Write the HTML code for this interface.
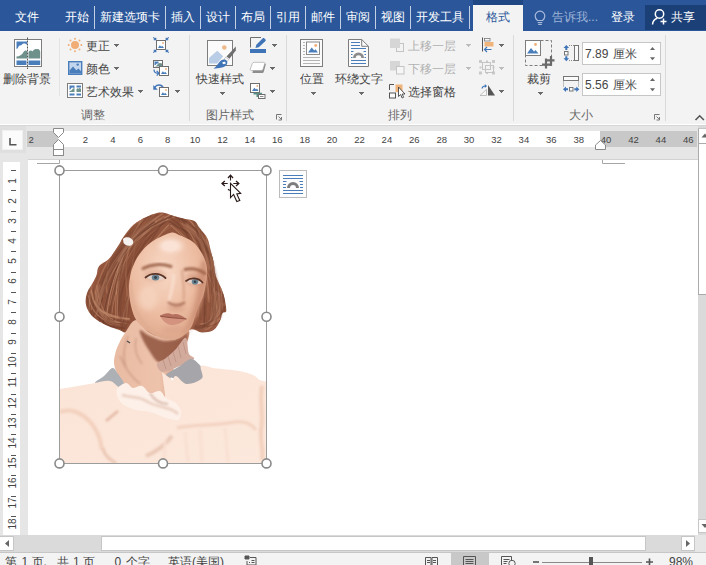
<!DOCTYPE html>
<html><head><meta charset="utf-8">
<style>
html,body{margin:0;padding:0;}
body{width:706px;height:565px;overflow:hidden;position:relative;background:#fff;font-family:"Liberation Sans",sans-serif;font-size:12px;color:#444;}
.a{position:absolute;white-space:nowrap;}
#tabs{left:0;top:0;width:706px;height:31px;background:#2b579a;}
.tab{position:absolute;top:9px;color:#fff;font-size:12px;line-height:16px;white-space:nowrap;margin-left:1px;}
.sep{position:absolute;top:6px;width:1px;height:23px;background:#c3cfe3;}
#ribbon{left:0;top:31px;width:706px;height:93px;background:#f3f3f3;}
.t{position:absolute;font-size:12px;line-height:14px;color:#444;white-space:nowrap;}
.g{color:#666;}
.dis{color:#b1b1b1;}
.vs{position:absolute;top:41px;width:1px;height:79px;background:#dadada;}
.arr{position:absolute;width:5px;height:1px;background:#6a6a6a;}
.arr::before{content:"";position:absolute;left:1px;top:1px;width:3px;height:1px;background:inherit;}
.arr::after{content:"";position:absolute;left:2px;top:2px;width:1px;height:1px;background:inherit;}
.arr.d{background:#bdbdbd;}
.rn{position:absolute;top:133.5px;width:20px;text-align:center;font-size:9.5px;line-height:12px;color:#444;}
.vn{position:absolute;left:3px;width:20px;height:20px;font-size:10px;color:#444;}
.vn span{position:absolute;left:0;top:0;width:20px;height:20px;line-height:20px;text-align:center;transform:rotate(-90deg);}
.st{position:absolute;top:554px;font-size:12px;line-height:16px;color:#444;white-space:nowrap;}
svg{position:absolute;overflow:visible;}
</style></head><body>
<!-- TAB BAR -->
<div id="tabs" class="a"></div>
<div class="tab" style="left:14px">文件</div>
<div class="tab" style="left:64px">开始</div>
<div class="sep" style="left:94px"></div>
<div class="tab" style="left:99px">新建选项卡</div>
<div class="sep" style="left:165px"></div>
<div class="tab" style="left:170px">插入</div>
<div class="sep" style="left:200px"></div>
<div class="tab" style="left:205px">设计</div>
<div class="sep" style="left:235px"></div>
<div class="tab" style="left:240px">布局</div>
<div class="sep" style="left:270px"></div>
<div class="tab" style="left:275px">引用</div>
<div class="sep" style="left:305px"></div>
<div class="tab" style="left:310px">邮件</div>
<div class="sep" style="left:340px"></div>
<div class="tab" style="left:345px">审阅</div>
<div class="sep" style="left:375px"></div>
<div class="tab" style="left:380px">视图</div>
<div class="sep" style="left:410px"></div>
<div class="tab" style="left:415px">开发工具</div>
<div class="sep" style="left:469px"></div><div class="a" style="left:473px;top:0;width:50px;height:5px;background:#1f4784;"></div><div class="a" style="left:473px;top:5px;width:50px;height:26px;background:#f3f3f3;"></div>
<div class="tab" style="left:485px;color:#2b579a">格式</div>
<div class="tab" style="left:551px;color:#9fb3d6">告诉我...</div>
<div class="tab" style="left:610px">登录</div>
<div class="a" style="left:645px;top:5px;width:61px;height:25px;background:#1b3f77;"></div>
<div class="tab" style="left:670px">共享</div>
<!-- RIBBON -->
<div id="ribbon" class="a"></div>

<!-- group separators -->
<div class="vs" style="left:189px;top:35px;height:86px"></div>
<div class="vs" style="left:286px;top:35px;height:86px"></div>
<div class="vs" style="left:513px;top:35px;height:86px"></div>
<div class="vs" style="left:665px;top:35px;height:86px"></div>
<div class="vs" style="left:59px;top:38px;height:58px;background:#e4e4e4"></div>
<!-- G1 -->
<div class="t" style="left:3px;top:72px">删除背景</div>
<div class="t" style="left:86px;top:39px">更正</div><div class="arr" style="left:114px;top:44px"></div>
<div class="t" style="left:86px;top:62px">颜色</div><div class="arr" style="left:114px;top:67px"></div>
<div class="t" style="left:86px;top:85px">艺术效果</div><div class="arr" style="left:138px;top:90px"></div>
<div class="arr" style="left:175px;top:90px"></div>
<div class="t g" style="left:81px;top:108px">调整</div>
<!-- G2 -->
<div class="t" style="left:196px;top:72px">快速样式</div><div class="arr" style="left:220px;top:92px"></div>
<div class="arr" style="left:272px;top:44px"></div>
<div class="arr" style="left:270px;top:67px"></div>
<div class="arr" style="left:270px;top:90px"></div>
<div class="t g" style="left:206px;top:108px">图片样式</div>
<!-- G3 -->
<div class="t" style="left:300px;top:72px">位置</div><div class="arr" style="left:311px;top:92px"></div>
<div class="t" style="left:335px;top:72px">环绕文字</div><div class="arr" style="left:359px;top:92px"></div>
<div class="t dis" style="left:408px;top:39px">上移一层</div><div class="arr d" style="left:466px;top:44px"></div>
<div class="t dis" style="left:408px;top:62px">下移一层</div><div class="arr d" style="left:466px;top:67px"></div>
<div class="t" style="left:408px;top:85px">选择窗格</div>
<div class="arr" style="left:499px;top:44px"></div>
<div class="arr d" style="left:499px;top:67px"></div>
<div class="arr" style="left:499px;top:90px"></div>
<div class="t g" style="left:388px;top:108px">排列</div>
<!-- G4 -->
<div class="t" style="left:527px;top:72px">裁剪</div><div class="arr" style="left:538px;top:92px"></div>
<div class="a" style="left:582px;top:42px;width:77px;height:21px;background:#fff;border:1px solid #c6c6c6;"></div>
<div class="a" style="left:582px;top:73px;width:77px;height:21px;background:#fff;border:1px solid #c6c6c6;"></div>
<div class="t" style="left:585px;top:47px;line-height:15px;letter-spacing:0">7.89</div><div class="t" style="left:613px;top:47px;line-height:15px;">厘米</div>
<div class="t" style="left:585px;top:78px;line-height:15px;letter-spacing:0">5.56</div><div class="t" style="left:613px;top:78px;line-height:15px;">厘米</div>
<div class="t g" style="left:569px;top:108px">大小</div>

<!-- ICONS -->
<svg id="ic" style="left:0;top:0" width="706" height="565" viewBox="0 0 706 565">
<!-- remove background -->
<g>
<rect x="14.5" y="39.5" width="27" height="27" fill="#fff" stroke="#7d7d7d"/>
<path d="M16.5 41.5h10.5v3.5c-1-1.6-4.2-2.2-5.5 0.2c-2.2-0.3-3.6 1.2-3.4 3c-0.8 0.1-1.3 0.5-1.6 1z" fill="#4a7ebb"/>
<path d="M16.5 58.5v-2c3-0.2 5.500-1.5 7-4.500c1-1.8 2.500-2 3.500-1v7.500z" fill="#6f918c"/>
<path d="M28.500 58.500v-6.500c1.200-1.700 2.800-1.900 4-0.600c1-2 3-3 4.500-2.200c1.300-0.800 2.700 0.200 3.200 2.300v7z" fill="#6f918c"/>
<rect x="16.500" y="60.500" width="10" height="4.500" fill="#4a7ebb"/>
<rect x="28.500" y="60.500" width="11.700" height="4.500" fill="#4a7ebb"/>
<line x1="27.500" y1="37.500" x2="27.500" y2="69" stroke="#555" stroke-width="1" stroke-dasharray="2 1"/>
</g>
<!-- sun -->
<g fill="#f0ae76">
<circle cx="75" cy="45" r="4"/>
<circle cx="75" cy="38.700" r="1"/><circle cx="75" cy="51.300" r="1"/>
<circle cx="68.700" cy="45" r="1"/><circle cx="81.300" cy="45" r="1"/>
<circle cx="70.500" cy="40.500" r="1"/><circle cx="79.500" cy="40.500" r="1"/>
<circle cx="70.500" cy="49.500" r="1"/><circle cx="79.500" cy="49.500" r="1"/>
</g>
<!-- color -->
<g>
<rect x="68.700" y="61.700" width="13" height="12.600" fill="#c3d6ee" stroke="#4a7ebb" stroke-width="1.400"/>
<path d="M69.500 73.500v-3l3.500-4l3.300 3.700l2.200-1.700l2.700 3v2z" fill="#4a7ebb"/>
<circle cx="77.700" cy="64.600" r="1.200" fill="#4a7ebb"/>
</g>
<!-- artistic effects -->
<g>
<rect x="67.500" y="83.500" width="15" height="14" fill="#fff" stroke="#7d7d7d"/>
<path d="M69.500 85.500h5v3c-1.500-1.500-3.500-1-3.800 0.800c-0.700 0-1 0.400-1.200 0.800z" fill="#4a7ebb"/>
<path d="M69.500 92v-1c1.500 0 2.500-0.800 3.200-2.200c0.500-0.700 1.300-0.700 1.800-0.200v3.400z" fill="#6f918c"/>
<path d="M76.500 85.500h4.500v2h-4.500z" fill="#4a7ebb"/>
<path d="M76.500 92v-3c0.800-1 1.500-1 2.200-0.300c0.700-0.900 1.700-0.900 2.300 0.300v3z" fill="#6f918c"/>
<rect x="69.500" y="93.500" width="5" height="2" fill="#4a7ebb"/>
<rect x="76.500" y="93.500" width="4.500" height="2" fill="#4a7ebb"/>
</g>

<!-- compress -->
<g>
<rect x="156.500" y="40.500" width="9" height="9" fill="#fff" stroke="#6e6e6e"/>
<path d="M158 48l1.800-2.800l1.400 1.600l1-1l1.800 2.200z" fill="#4a7ebb"/>
<circle cx="163" cy="43" r="0.900" fill="#f0ae76"/>
<g stroke="#3f74b8" stroke-width="1.100" fill="none">
<path d="M153.300 37.300l2.400 2.400M153.700 39.800h2.100v-2.100"/>
<path d="M168.700 37.300l-2.400 2.400M168.300 39.800h-2.100v-2.100"/>
<path d="M153.300 52.700l2.400-2.400M153.700 50.200h2.100v2.100"/>
<path d="M168.700 52.700l-2.400-2.400M168.300 50.200h-2.100v2.100"/>
</g>
</g>
<!-- change picture -->
<g>
<rect x="153.500" y="60.500" width="9" height="7" fill="#fff" stroke="#6e6e6e"/>
<path d="M154.500 61.500h4v2.500c-1-0.800-2.200-0.300-2.500 0.700c-0.700 0-1.200 0.400-1.500 0.900z" fill="#4a7ebb"/>
<path d="M154.500 66.500c1.500-0.300 2.500-1 3.200-2.300c1-1.300 2.800-1.600 4.300-0.600v2.900z" fill="#6f918c"/>
<rect x="159.500" y="66.500" width="9" height="9" fill="#fff" stroke="#6e6e6e"/>
<path d="M161 74l1.800-2.800l1.400 1.600l1-1l1.800 2.200z" fill="#4a7ebb"/>
<circle cx="166" cy="69" r="0.900" fill="#f0ae76"/>
<path d="M154 69.500c0 2.500 1.500 3.800 4 3.800" fill="none" stroke="#3f74b8" stroke-width="1.200"/>
<path d="M156.700 71l2.300 2.300l-2.300 2.300" fill="none" stroke="#3f74b8" stroke-width="1.200"/>
</g>
<!-- reset picture -->
<g>
<path d="M154.200 88.500c1-3 4-4.300 6.500-3.200c1.300 0.600 2.200 1.500 2.600 2.700" fill="none" stroke="#3f74b8" stroke-width="1.500"/>
<path d="M153.300 85v4.800h4.500z" fill="#3f74b8"/>
<rect x="159.500" y="87.500" width="9" height="9" fill="#fff" stroke="#6e6e6e"/>
<path d="M161 95l1.800-2.800l1.400 1.600l1-1l1.800 2.200z" fill="#4a7ebb"/>
<circle cx="166" cy="90" r="0.900" fill="#f0ae76"/>
</g>

<!-- quick styles -->
<g>
<rect x="207.500" y="40.500" width="25" height="25" fill="#fbfbfb" stroke="#7d7d7d"/>
<path d="M209 63.500v-5.500l8.200-7.200l6 5.500l-6 7.200z" fill="#b9cde6"/>
<circle cx="224.300" cy="47.500" r="2.300" fill="#f0b98a"/>
<path d="M235.800 46.500v4l-6.300 8.200l-3-2.200z" fill="#6e6e6e"/>
<path d="M225.700 57.300l3 2.200l-1.500 1.900l-3-2.200z" fill="#fff" stroke="#8a8a8a" stroke-width="0.500"/>
<path d="M224 59.500c2 0.200 3.200 1.300 3.300 2.800c0.200 2.700-2.300 4.500-5.500 5.200c-3 0.700-6 0.900-8.300 1c3-2 4.200-4.200 5.700-6.200c1.300-1.800 3-2.900 4.800-2.800z" fill="#3f74b8"/>
<path d="M222 63c0.800-1.200 2-1.600 3-1.200c0.700 0.500 0.800 1.500 0.200 2.500c-0.500-0.700-1.200-0.700-1.800 0c-0.200-0.700-0.700-1.100-1.400-1.300z" fill="#fff"/>
</g>
<!-- picture border -->
<g>
<path d="M250.500 47.500v-10h10.500" fill="none" stroke="#6e6e6e"/>
<path d="M264.200 38.200l1.300 1.300c0.400 0.400 0.400 1 0 1.400l-6.700 6.400l-3.300 0.700l0.800-3.200l6.500-6.600c0.400-0.400 1-0.400 1.400 0z" fill="#3f74b8"/>
<rect x="250" y="49" width="16" height="4" fill="#3f74b8"/>
</g>
<!-- picture effects -->
<g>
<path d="M254.500 63.500h10.200c0.800 0 1.200 0.600 1 1.300l-1.800 6.700c-0.300 1-1 1.500-2 1.500h-9.500z" fill="#8d8d8d"/>
<path d="M254.200 62.300h9.300c1 0 1.500 0.600 1.200 1.500l-1.700 5.500c-0.300 0.800-0.900 1.200-1.700 1.200h-9.800c-1 0-1.500-0.600-1.200-1.500l2-5.500c0.300-0.800 1-1.200 1.900-1.200z" fill="#fff" stroke="#9a9a9a" stroke-width="0.600"/>
</g>
<!-- picture layout -->
<g>
<rect x="250.500" y="83.500" width="9" height="9" fill="#fff" stroke="#6e6e6e"/>
<path d="M252 91l2.300-3.300l1.700 1.800l1-1l1.500 2.500z" fill="#4a7ebb"/>
<circle cx="257.300" cy="86" r="0.900" fill="#f0ae76"/>
<path d="M253.500 92.800h8.500v1.600h-3.300v2.600h-2.200v-2.600h-3z" fill="#5b8f85"/>
<rect x="258.500" y="94.500" width="6.500" height="4" fill="#fff" stroke="#6e6e6e"/>
<rect x="260" y="96" width="3.500" height="1" fill="#8a8a8a"/>
</g>

<!-- position -->
<g>
<rect x="300.500" y="39.500" width="22" height="27" fill="#fafafa" stroke="#7d7d7d"/>
<rect x="306.500" y="42" width="13" height="12.500" fill="#fff" stroke="#8a8a8a"/>
<path d="M308 52.500l3.700-5l2.500 3l1.300-1.300l2.500 3.300z" fill="#4a7ebb"/>
<circle cx="315.700" cy="45.500" r="1.400" fill="#f0ae76"/>
<g stroke="#b5b5b5" stroke-width="1">
<path d="M303 42.500h2M303 45.500h2M303 48.500h2M303 51.500h2M303 54.500h2"/>
<path d="M303 57.500h17M303 60.500h17M303 63.500h17"/>
</g>
</g>
<!-- wrap text -->
<g>
<path d="M348.500 39.500h13.200l6.800 6.800v20.200h-20z" fill="#fafafa" stroke="#7d7d7d"/>
<path d="M361.700 39.500v6.800h6.800" fill="none" stroke="#7d7d7d"/>
<g stroke="#4a7ebb" stroke-width="1">
<path d="M351 42.500h9M351 45.500h9M351 48.500h15M351 60.500h15M351 63.500h15"/>
<path d="M351 51.500h2.500M363.500 51.500h2.500M351 54.500h1.500M364.500 54.500h1.500M351 57.500h1.500M364.500 57.500h1.500"/>
</g>
<path d="M353 58a5.500 5.500 0 0 1 11 0h-2.700a2.800 2.800 0 0 0 -5.600 0z" fill="#8a8a8a"/>
</g>
<!-- bring forward (disabled) -->
<g>
<rect x="396.500" y="43.500" width="7" height="8" fill="none" stroke="#c4c4c4"/>
<rect x="390" y="38.500" width="10" height="9.500" fill="#d6d6d6"/>
</g>
<!-- send backward (disabled) -->
<g>
<rect x="390" y="61" width="10" height="9.500" fill="#d6d6d6"/>
<rect x="396.500" y="66.500" width="7.500" height="7.500" fill="#f6f6f6" stroke="#c4c4c4"/>
</g>
<!-- selection pane -->
<g>
<path d="M394 84.500h-4.500v5.500" fill="none" stroke="#555"/>
<rect x="389.500" y="93" width="6" height="5" fill="#fafafa" stroke="#555"/>
<rect x="395.500" y="84.500" width="7" height="7.500" fill="#f0b47a"/>
<path d="M398.500 87v9.500l2.200-2l1.400 3.500l1.500-0.700l-1.400-3.300h2.800z" fill="#fff" stroke="#444" stroke-width="0.900"/>
</g>
<!-- align -->
<g>
<path d="M482.500 37.500v14" stroke="#555" fill="none"/>
<rect x="484.500" y="38.500" width="5.500" height="2.500" fill="#fafafa" stroke="#777" stroke-width="0.800"/>
<rect x="484.500" y="42" width="9" height="4.500" fill="#f0b47a"/>
<path d="M484.500 49.500h7M487 47l-2.500 2.500l2.500 2.500" fill="none" stroke="#3f74b8" stroke-width="1.200"/>
</g>
<!-- group (disabled) -->
<g fill="#c9c9c9">
<rect x="479" y="60" width="3" height="3"/><rect x="492" y="60" width="3" height="3"/>
<rect x="479" y="71.500" width="3" height="3"/><rect x="492" y="71.500" width="3" height="3"/>
<rect x="486" y="60.500" width="2" height="2"/><rect x="486" y="72" width="2" height="2"/>
<rect x="479.500" y="66.500" width="2" height="2"/><rect x="492.500" y="66.500" width="2" height="2"/>
<g fill="none" stroke="#c4c4c4"><rect x="482.500" y="62.500" width="8" height="7"/><rect x="485.500" y="65.500" width="8" height="7"/></g>
</g>
<!-- rotate -->
<g>
<path d="M486.500 89.500v6h-6.500z" fill="#f8f8f8" stroke="#b8b8b8" stroke-width="0.900"/>
<path d="M488 95.500v-10.500l7 10.500z" fill="#555"/>
<path d="M482 88.500c0.300-1.800 1.500-2.500 3.300-2.500" fill="none" stroke="#3f74b8" stroke-width="1.200"/>
<path d="M484.800 84l2.200 2l-2.200 2z" fill="#3f74b8"/>
</g>

<!-- crop -->
<g>
<rect x="525.500" y="40.500" width="26" height="25" fill="none" stroke="#7d7d7d" stroke-dasharray="3 2"/>
<rect x="525.500" y="40.500" width="15" height="15" fill="#fff" stroke="#7d7d7d"/>
<path d="M527 53.500l4-5.500l3 3.500l1.500-1.500l3 3.500z" fill="#4a7ebb"/>
<circle cx="535.500" cy="44.500" r="1.400" fill="#f0ae76"/>
<path d="M546 58.500v10M542 64.700h8.500" stroke="#6a6a6a" stroke-width="2.200" fill="none"/>
<path d="M545 60.300h9.500M551 56v9.700" stroke="#6a6a6a" stroke-width="2.200" fill="none"/>
</g>
<!-- height -->
<g>
<rect x="574.500" y="45.500" width="4" height="15" fill="#fafafa" stroke="#777"/>
<path d="M569 45.500h5M569 60.500h5" stroke="#888" stroke-dasharray="1 1"/>
<rect x="564.500" y="51.500" width="3.500" height="3.500" fill="#fafafa" stroke="#777"/>
<path d="M566.300 45l2.800 3h-1.800v2h-2v-2h-1.800z" fill="#3f74b8"/>
<path d="M566.300 61.300l2.800-3h-1.800v-2h-2v2h-1.800z" fill="#3f74b8"/>
</g>
<!-- width -->
<g>
<rect x="563.500" y="76.500" width="15" height="4" fill="#fafafa" stroke="#777"/>
<path d="M563.500 81.500v5M578.500 81.500v5" stroke="#888" stroke-dasharray="1 1"/>
<rect x="569.500" y="87.500" width="3.500" height="3.500" fill="#fafafa" stroke="#777"/>
<path d="M563 89.300l3-2.800v1.800h2v2h-2v1.800z" fill="#3f74b8"/>
<path d="M579.300 89.300l-3-2.800v1.800h-2v2h2v1.800z" fill="#3f74b8"/>
</g>
<!-- spinners -->
<g fill="#666">
<path d="M650 50l2.500-3l2.500 3z"/><path d="M650 57.300l2.500 3l2.500-3z"/>
<path d="M650 81l2.500-3l2.500 3z"/><path d="M650 88.300l2.500 3l2.500-3z"/>
</g>
<!-- dialog launchers -->
<g fill="none" stroke="#777" stroke-width="1">
<path d="M281.500 114.500h-5v5M278.500 116.500l3 3M281.500 117v3h-3"/>
<path d="M659.500 114.500h-5v5M656.500 116.500l3 3M659.500 117v3h-3"/>
</g>
<!-- collapse chevron -->
<path d="M695.500 120l4.200-4.200l4.200 4.200" fill="none" stroke="#555" stroke-width="1.600"/>
</svg>
<div class="a" style="left:0;top:125px;width:706px;height:1px;background:#d6d6d6;"></div>
<div class="a" style="left:0;top:126px;width:706px;height:34px;background:#e6e6e6;"></div>
<div class="a" style="left:0;top:126px;width:26px;height:27px;background:#dfdfdf;"></div>
<div class="a" style="left:2px;top:130px;width:19px;height:18px;background:#fbfbfb;border:1px solid #f0f0f0;box-sizing:content-box"></div>
<div class="a" style="left:27px;top:131px;width:31px;height:16px;background:#c8c8c8;"></div>
<div class="a" style="left:58px;top:131px;width:542px;height:16px;background:#fff;"></div>
<div class="a" style="left:600px;top:131px;width:97px;height:16px;background:#c8c8c8;"></div>
<div class="rn" style="left:21.2px">2</div>
<div class="rn" style="left:75.5px">2</div>
<div class="rn" style="left:102.9px">4</div>
<div class="rn" style="left:130.3px">6</div>
<div class="rn" style="left:157.7px">8</div>
<div class="rn" style="left:185.1px">10</div>
<div class="rn" style="left:212.5px">12</div>
<div class="rn" style="left:239.9px">14</div>
<div class="rn" style="left:267.3px">16</div>
<div class="rn" style="left:294.7px">18</div>
<div class="rn" style="left:322.1px">20</div>
<div class="rn" style="left:349.5px">22</div>
<div class="rn" style="left:376.9px">24</div>
<div class="rn" style="left:404.3px">26</div>
<div class="rn" style="left:431.7px">28</div>
<div class="rn" style="left:459.1px">30</div>
<div class="rn" style="left:486.5px">32</div>
<div class="rn" style="left:513.9px">34</div>
<div class="rn" style="left:541.3px">36</div>
<div class="rn" style="left:568.7px">38</div>
<div class="rn" style="left:596.1px">40</div>
<div class="rn" style="left:623.5px">42</div>
<div class="rn" style="left:650.9px">44</div>
<div class="rn" style="left:678.3px">46</div>
<div class="a" style="left:28px;top:159px;width:670px;height:1px;background:#d2d2d2;"></div><div class="a" style="left:0;top:160px;width:28px;height:375px;background:#e6e6e6;"></div>
<div class="a" style="left:3px;top:162px;width:17px;height:373px;background:#fff;"></div>
<div class="a" style="left:11px;top:170px;width:5px;height:1px;background:#555;"></div>
<div class="a" style="left:11px;top:190px;width:5px;height:1px;background:#555;"></div>
<div class="a" style="left:11px;top:211px;width:5px;height:1px;background:#555;"></div>
<div class="a" style="left:11px;top:231px;width:5px;height:1px;background:#555;"></div>
<div class="a" style="left:11px;top:251px;width:5px;height:1px;background:#555;"></div>
<div class="a" style="left:11px;top:272px;width:5px;height:1px;background:#555;"></div>
<div class="a" style="left:11px;top:292px;width:5px;height:1px;background:#555;"></div>
<div class="a" style="left:11px;top:312px;width:5px;height:1px;background:#555;"></div>
<div class="a" style="left:11px;top:333px;width:5px;height:1px;background:#555;"></div>
<div class="a" style="left:11px;top:353px;width:5px;height:1px;background:#555;"></div>
<div class="a" style="left:11px;top:373px;width:5px;height:1px;background:#555;"></div>
<div class="a" style="left:11px;top:394px;width:5px;height:1px;background:#555;"></div>
<div class="a" style="left:11px;top:414px;width:5px;height:1px;background:#555;"></div>
<div class="a" style="left:11px;top:434px;width:5px;height:1px;background:#555;"></div>
<div class="a" style="left:11px;top:455px;width:5px;height:1px;background:#555;"></div>
<div class="a" style="left:11px;top:475px;width:5px;height:1px;background:#555;"></div>
<div class="a" style="left:11px;top:496px;width:5px;height:1px;background:#555;"></div>
<div class="a" style="left:11px;top:516px;width:5px;height:1px;background:#555;"></div>
<div class="vn" style="top:170.5px"><span>1</span></div>
<div class="vn" style="top:190.7px"><span>2</span></div>
<div class="vn" style="top:210.9px"><span>3</span></div>
<div class="vn" style="top:231.0px"><span>4</span></div>
<div class="vn" style="top:251.2px"><span>5</span></div>
<div class="vn" style="top:271.4px"><span>6</span></div>
<div class="vn" style="top:291.6px"><span>7</span></div>
<div class="vn" style="top:311.8px"><span>8</span></div>
<div class="vn" style="top:331.9px"><span>9</span></div>
<div class="vn" style="top:352.1px"><span>10</span></div>
<div class="vn" style="top:372.3px"><span>11</span></div>
<div class="vn" style="top:392.5px"><span>12</span></div>
<div class="vn" style="top:412.7px"><span>13</span></div>
<div class="vn" style="top:432.8px"><span>14</span></div>
<div class="vn" style="top:453.0px"><span>15</span></div>
<div class="vn" style="top:473.2px"><span>16</span></div>
<div class="vn" style="top:493.4px"><span>17</span></div>
<div class="vn" style="top:513.6px"><span>18</span></div>
<div class="a" style="left:698px;top:126px;width:8px;height:409px;background:#dadada;"></div>
<div class="a" style="left:698px;top:128px;width:8px;height:15px;background:#fff;border-left:1px solid #ababab;border-top:1px solid #c6c6c6;box-sizing:border-box"></div>
<div class="a" style="left:698px;top:143px;width:8px;height:152px;background:#fff;border:1px solid #ababab;border-right:none;box-sizing:border-box"></div>
<div class="a" style="left:698px;top:519px;width:8px;height:14px;background:#fff;border:1px solid #c6c6c6;border-right:none;box-sizing:border-box"></div>
<div class="a" style="left:0;top:535px;width:706px;height:17px;background:#dadada;"></div>
<div class="a" style="left:695px;top:535px;width:11px;height:17px;background:#e6e6e6;"></div>
<div class="a" style="left:0;top:536px;width:14px;height:15px;background:#fff;border:1px solid #c6c6c6;border-left:none;box-sizing:border-box"></div>
<div class="a" style="left:101px;top:536px;width:545px;height:15px;background:#fff;border:1px solid #c6c6c6;box-sizing:border-box"></div>
<div class="a" style="left:681px;top:536px;width:14px;height:15px;background:#fff;border:1px solid #c6c6c6;box-sizing:border-box"></div>
<div class="a" style="left:0;top:552px;width:706px;height:1px;background:#c6c6c6;"></div>
<div class="a" style="left:0;top:553px;width:706px;height:12px;background:#f3f3f3;"></div>
<div class="st" style="left:5px">第</div><div class="st" style="left:21.500px">1</div><div class="st" style="left:31.500px">页,</div><div class="st" style="left:56.500px">共</div><div class="st" style="left:73px">1</div><div class="st" style="left:82.500px">页</div>
<div class="st" style="left:114.500px">0</div><div class="st" style="left:126px">个字</div>
<div class="st" style="left:168px">英语(美国)</div>
<div class="st" style="left:669px">98%</div>
<svg id="pic" style="left:0;top:0" width="706" height="565" viewBox="0 0 706 565">
<defs>
<clipPath id="pc"><rect x="60" y="171" width="206.500" height="292.500"/></clipPath>
<linearGradient id="hg" x1="0" y1="0" x2="1" y2="1"><stop offset="0" stop-color="#9c5d43"/><stop offset="0.500" stop-color="#8b4f38"/><stop offset="1" stop-color="#9a5b43"/></linearGradient>
<radialGradient id="fg" cx="0.450" cy="0.350" r="0.750"><stop offset="0" stop-color="#f8d9c6"/><stop offset="0.550" stop-color="#edbda2"/><stop offset="1" stop-color="#d9a184"/></radialGradient>
<linearGradient id="ng" x1="0" y1="0" x2="1" y2="0"><stop offset="0" stop-color="#e9bba3"/><stop offset="0.600" stop-color="#eec3ac"/><stop offset="1" stop-color="#c98f76"/></linearGradient>
<linearGradient id="bg" x1="0" y1="0" x2="1" y2="1"><stop offset="0" stop-color="#fbe4d6"/><stop offset="1" stop-color="#fce8dc"/></linearGradient>
<filter id="b1" x="-20%" y="-20%" width="140%" height="140%"><feGaussianBlur stdDeviation="1.200"/></filter>
<filter id="b2" x="-20%" y="-20%" width="140%" height="140%"><feGaussianBlur stdDeviation="2.500"/></filter>
</defs>
<g clip-path="url(#pc)">
<clipPath id="hc"><path d="M157.0 213.0C160.1 212.3 162.3 212.5 165.0 213.0C167.7 213.5 169.6 214.8 173.0 215.8C176.4 216.8 181.9 218.1 185.5 219.0C189.1 219.9 192.1 219.5 194.4 221.0C196.7 222.5 197.4 225.2 199.5 228.0C201.6 230.8 205.4 234.4 207.2 238.0C209.0 241.6 209.3 245.5 210.4 249.6C211.5 253.7 212.8 258.2 213.6 262.4C214.4 266.6 214.7 271.6 215.5 275.0C216.3 278.4 217.3 279.4 218.7 282.8C220.1 286.2 222.5 290.8 223.8 295.5C225.1 300.2 226.5 307.9 226.3 310.8C226.1 313.7 223.6 311.3 222.5 313.0C221.4 314.7 221.5 318.2 220.0 321.0C218.5 323.8 216.6 328.1 213.6 330.0C210.6 331.9 205.6 332.6 202.0 332.5C198.4 332.4 195.6 329.1 191.9 329.3C188.2 329.6 187.0 332.9 180.0 334.0C173.0 335.1 158.3 336.5 150.0 336.0C141.7 335.5 134.2 331.6 130.0 331.0C125.8 330.4 126.3 332.7 124.6 332.5C122.8 332.3 122.3 331.1 119.5 330.0C116.7 328.9 111.8 327.7 108.0 326.0C104.2 324.3 99.8 322.0 96.6 319.7C93.4 317.4 90.8 314.8 89.0 312.0C87.2 309.2 86.0 306.2 85.7 303.0C85.4 299.8 85.8 296.4 87.0 293.0C88.2 289.6 91.2 285.8 92.8 282.8C94.4 279.8 95.6 277.8 96.6 275.0C97.6 272.2 96.9 268.9 99.0 266.2C101.1 263.5 106.1 262.0 109.3 258.6C112.5 255.2 115.9 249.4 118.3 245.8C120.7 242.2 120.9 240.4 123.4 236.9C126.0 233.4 129.8 228.1 133.6 224.8C137.4 221.5 142.4 219.0 146.3 217.0C150.2 215.0 153.9 213.7 157.0 213.0Z"/></clipPath>
<path d="M157.0 213.0C160.1 212.3 162.3 212.5 165.0 213.0C167.7 213.5 169.6 214.8 173.0 215.8C176.4 216.8 181.9 218.1 185.5 219.0C189.1 219.9 192.1 219.5 194.4 221.0C196.7 222.5 197.4 225.2 199.5 228.0C201.6 230.8 205.4 234.4 207.2 238.0C209.0 241.6 209.3 245.5 210.4 249.6C211.5 253.7 212.8 258.2 213.6 262.4C214.4 266.6 214.7 271.6 215.5 275.0C216.3 278.4 217.3 279.4 218.7 282.8C220.1 286.2 222.5 290.8 223.8 295.5C225.1 300.2 226.5 307.9 226.3 310.8C226.1 313.7 223.6 311.3 222.5 313.0C221.4 314.7 221.5 318.2 220.0 321.0C218.5 323.8 216.6 328.1 213.6 330.0C210.6 331.9 205.6 332.6 202.0 332.5C198.4 332.4 195.6 329.1 191.9 329.3C188.2 329.6 187.0 332.9 180.0 334.0C173.0 335.1 158.3 336.5 150.0 336.0C141.7 335.5 134.2 331.6 130.0 331.0C125.8 330.4 126.3 332.7 124.6 332.5C122.8 332.3 122.3 331.1 119.5 330.0C116.7 328.9 111.8 327.7 108.0 326.0C104.2 324.3 99.8 322.0 96.6 319.7C93.4 317.4 90.8 314.8 89.0 312.0C87.2 309.2 86.0 306.2 85.7 303.0C85.4 299.8 85.8 296.4 87.0 293.0C88.2 289.6 91.2 285.8 92.8 282.8C94.4 279.8 95.6 277.8 96.6 275.0C97.6 272.2 96.9 268.9 99.0 266.2C101.1 263.5 106.1 262.0 109.3 258.6C112.5 255.2 115.9 249.4 118.3 245.8C120.7 242.2 120.9 240.4 123.4 236.9C126.0 233.4 129.8 228.1 133.6 224.8C137.4 221.5 142.4 219.0 146.3 217.0C150.2 215.0 153.9 213.7 157.0 213.0Z" fill="url(#hg)"/>
<g clip-path="url(#hc)" fill="none" stroke-linecap="round"><path d="M149.0 215.0Q119.0 242.6 115.3 294.8" stroke="#6a3b2a" stroke-width="1.5" opacity="0.43"/><path d="M139.4 218.4Q113.3 249.7 98.1 313.5" stroke="#7a4632" stroke-width="1.3" opacity="0.55"/><path d="M138.5 220.6Q97.0 253.0 90.1 300.6" stroke="#ad7457" stroke-width="0.8" opacity="0.39"/><path d="M148.3 223.6Q102.0 256.7 95.6 314.7" stroke="#85503a" stroke-width="1.3" opacity="0.55"/><path d="M160.8 219.5Q119.6 247.4 110.3 322.3" stroke="#bb8466" stroke-width="1.0" opacity="0.63"/><path d="M164.0 216.2Q113.6 244.7 112.1 312.5" stroke="#bb8466" stroke-width="1.2" opacity="0.38"/><path d="M156.5 215.1Q113.5 247.5 102.4 328.4" stroke="#6a3b2a" stroke-width="1.4" opacity="0.55"/><path d="M171.0 217.1Q125.1 252.0 117.2 315.2" stroke="#6a3b2a" stroke-width="1.6" opacity="0.52"/><path d="M162.6 213.8Q114.9 244.1 117.5 317.2" stroke="#bb8466" stroke-width="1.3" opacity="0.66"/><path d="M149.9 225.2Q110.8 261.2 102.9 315.8" stroke="#bb8466" stroke-width="0.8" opacity="0.44"/><path d="M151.6 224.3Q101.5 244.3 91.4 309.5" stroke="#ad7457" stroke-width="1.5" opacity="0.45"/><path d="M152.6 217.7Q135.0 265.0 125.1 329.4" stroke="#7a4632" stroke-width="1.3" opacity="0.35"/><path d="M169.2 215.4Q112.5 239.3 99.8 297.7" stroke="#bb8466" stroke-width="1.6" opacity="0.59"/><path d="M156.6 221.0Q114.5 237.0 116.4 294.1" stroke="#c48e70" stroke-width="1.4" opacity="0.49"/><path d="M152.0 214.3Q128.6 245.2 114.6 294.4" stroke="#7a4632" stroke-width="0.8" opacity="0.56"/><path d="M140.1 220.4Q111.7 268.3 110.5 329.0" stroke="#7a4632" stroke-width="1.3" opacity="0.40"/><path d="M146.1 217.5Q103.0 232.3 103.3 296.8" stroke="#ad7457" stroke-width="1.1" opacity="0.46"/><path d="M141.8 222.7Q116.9 251.4 119.1 310.7" stroke="#7a4632" stroke-width="1.6" opacity="0.53"/><path d="M141.9 220.1Q88.7 244.1 89.1 312.6" stroke="#c48e70" stroke-width="1.5" opacity="0.53"/><path d="M172.3 217.6Q112.0 247.6 97.4 313.1" stroke="#85503a" stroke-width="1.4" opacity="0.69"/><path d="M170.1 223.5Q135.8 256.8 122.4 320.9" stroke="#bb8466" stroke-width="1.4" opacity="0.70"/><path d="M167.6 219.1Q113.1 246.2 96.1 315.6" stroke="#c48e70" stroke-width="1.6" opacity="0.68"/><path d="M150.6 215.9Q112.7 240.3 97.5 299.7" stroke="#85503a" stroke-width="1.5" opacity="0.52"/><path d="M162.1 223.4Q97.0 249.9 91.6 317.8" stroke="#7a4632" stroke-width="1.1" opacity="0.41"/><path d="M167.6 217.3Q131.2 260.6 121.6 329.9" stroke="#6a3b2a" stroke-width="1.4" opacity="0.41"/><path d="M141.1 215.0Q132.8 247.7 126.0 323.5" stroke="#ad7457" stroke-width="1.3" opacity="0.47"/><path d="M157.9 214.7Q98.9 256.8 88.6 329.9" stroke="#7a4632" stroke-width="1.1" opacity="0.66"/><path d="M169.0 215.7Q117.4 242.9 98.6 303.4" stroke="#bb8466" stroke-width="1.2" opacity="0.64"/><path d="M138.4 222.6Q118.6 254.9 125.7 317.8" stroke="#85503a" stroke-width="0.8" opacity="0.40"/><path d="M156.4 224.3Q120.0 262.0 120.6 315.7" stroke="#7a4632" stroke-width="1.1" opacity="0.60"/><path d="M158.3 217.2Q112.2 258.3 109.8 313.7" stroke="#85503a" stroke-width="0.8" opacity="0.42"/><path d="M137.7 214.3Q102.8 247.4 107.0 293.1" stroke="#bb8466" stroke-width="1.3" opacity="0.53"/><path d="M156.5 222.0Q115.8 243.6 107.0 312.8" stroke="#c48e70" stroke-width="1.2" opacity="0.66"/><path d="M173.1 225.0Q134.4 249.1 125.5 299.9" stroke="#ad7457" stroke-width="1.1" opacity="0.38"/><path d="M145.6 214.0Q111.6 260.2 116.1 322.6" stroke="#c48e70" stroke-width="1.3" opacity="0.48"/><path d="M146.1 214.8Q121.4 245.3 107.6 321.1" stroke="#7a4632" stroke-width="1.6" opacity="0.64"/><path d="M142.5 218.6Q119.9 250.5 109.7 305.2" stroke="#c48e70" stroke-width="1.0" opacity="0.47"/><path d="M154.3 222.1Q116.8 242.9 104.1 312.2" stroke="#6a3b2a" stroke-width="1.6" opacity="0.63"/><path d="M174.9 214.4Q108.5 243.5 99.2 293.5" stroke="#7a4632" stroke-width="1.4" opacity="0.65"/><path d="M163.0 225.3Q115.3 254.2 105.0 312.9" stroke="#bb8466" stroke-width="0.8" opacity="0.37"/><path d="M163.5 218.5Q102.5 252.5 91.0 328.6" stroke="#6a3b2a" stroke-width="1.2" opacity="0.43"/><path d="M146.6 214.6Q100.7 249.4 88.5 330.8" stroke="#85503a" stroke-width="0.8" opacity="0.53"/><path d="M145.5 214.4Q109.4 243.0 94.8 294.0" stroke="#bb8466" stroke-width="1.2" opacity="0.42"/><path d="M153.8 221.7Q99.1 266.8 99.4 323.3" stroke="#6a3b2a" stroke-width="1.4" opacity="0.54"/><path d="M143.6 219.2Q121.0 244.0 127.3 296.1" stroke="#ad7457" stroke-width="1.2" opacity="0.66"/><path d="M174.8 217.0Q118.5 236.3 97.0 301.0" stroke="#c48e70" stroke-width="1.3" opacity="0.49"/><path d="M178.4 214.7Q206.4 236.3 201.5 288.3" stroke="#7a4632" stroke-width="0.7" opacity="0.58"/><path d="M179.4 220.1Q228.5 255.4 224.2 312.5" stroke="#7a4632" stroke-width="0.8" opacity="0.51"/><path d="M175.9 225.5Q223.2 238.5 224.3 310.2" stroke="#bb8466" stroke-width="0.9" opacity="0.41"/><path d="M178.1 215.0Q204.5 239.6 205.5 315.2" stroke="#6a3b2a" stroke-width="0.9" opacity="0.38"/><path d="M180.0 214.5Q197.4 235.0 198.6 299.0" stroke="#85503a" stroke-width="1.5" opacity="0.40"/><path d="M194.8 223.4Q218.8 251.9 214.1 320.2" stroke="#bb8466" stroke-width="1.4" opacity="0.58"/><path d="M169.3 224.0Q226.9 242.7 222.1 313.9" stroke="#7a4632" stroke-width="1.5" opacity="0.61"/><path d="M185.1 223.8Q204.0 245.9 198.4 316.6" stroke="#c48e70" stroke-width="1.3" opacity="0.38"/><path d="M169.3 221.6Q225.3 251.0 223.9 302.3" stroke="#6a3b2a" stroke-width="1.3" opacity="0.59"/><path d="M182.7 214.0Q221.6 246.0 219.5 319.4" stroke="#c48e70" stroke-width="1.2" opacity="0.61"/><path d="M182.2 223.7Q225.9 245.1 220.8 295.8" stroke="#c48e70" stroke-width="1.6" opacity="0.52"/><path d="M179.5 219.7Q219.9 247.2 216.5 320.3" stroke="#6a3b2a" stroke-width="1.2" opacity="0.47"/><path d="M187.5 222.3Q216.6 237.0 214.8 291.1" stroke="#c48e70" stroke-width="0.8" opacity="0.43"/><path d="M182.7 222.5Q210.9 234.6 205.7 306.4" stroke="#85503a" stroke-width="0.9" opacity="0.69"/><path d="M196.1 214.2Q218.0 249.5 210.4 322.7" stroke="#bb8466" stroke-width="1.0" opacity="0.67"/><path d="M195.9 214.9Q199.6 249.9 200.4 319.4" stroke="#85503a" stroke-width="1.4" opacity="0.53"/><path d="M194.6 222.4Q206.1 263.9 204.2 326.3" stroke="#6a3b2a" stroke-width="1.6" opacity="0.59"/><path d="M180.2 222.7Q206.7 245.9 209.2 302.3" stroke="#bb8466" stroke-width="1.4" opacity="0.64"/><path d="M171.6 225.1Q216.7 258.3 217.3 326.5" stroke="#ad7457" stroke-width="1.1" opacity="0.65"/><path d="M170.3 225.1Q217.8 263.7 218.4 324.3" stroke="#c48e70" stroke-width="1.0" opacity="0.68"/><path d="M175.5 217.2Q212.3 226.3 211.8 293.7" stroke="#6a3b2a" stroke-width="1.4" opacity="0.57"/><path d="M195.4 225.3Q209.4 247.0 212.8 318.1" stroke="#ad7457" stroke-width="1.3" opacity="0.40"/><path d="M194.1 219.8Q220.7 246.8 222.6 310.3" stroke="#bb8466" stroke-width="1.0" opacity="0.61"/><path d="M197.3 217.1Q218.4 240.1 215.7 298.8" stroke="#7a4632" stroke-width="1.3" opacity="0.38"/><path d="M183.0 223.7Q212.9 239.6 212.9 305.8" stroke="#ad7457" stroke-width="0.8" opacity="0.42"/><path d="M170.7 218.1Q199.6 235.7 200.5 296.0" stroke="#6a3b2a" stroke-width="1.4" opacity="0.49"/><path d="M180.4 220.3Q204.9 244.9 208.2 300.6" stroke="#bb8466" stroke-width="0.8" opacity="0.53"/><path d="M186.9 224.4Q202.8 242.9 203.8 297.5" stroke="#ad7457" stroke-width="1.1" opacity="0.46"/><path d="M192.4 225.6Q206.6 239.0 201.4 304.6" stroke="#85503a" stroke-width="1.1" opacity="0.38"/><path d="M195.9 225.1Q213.6 240.2 212.3 306.5" stroke="#7a4632" stroke-width="0.8" opacity="0.53"/><path d="M188.5 225.3Q222.7 250.9 217.5 314.8" stroke="#85503a" stroke-width="1.4" opacity="0.35"/><path d="M171.8 220.8Q206.6 246.8 199.0 317.9" stroke="#85503a" stroke-width="1.3" opacity="0.59"/><path d="M171.4 214.8Q212.8 248.9 212.2 311.8" stroke="#85503a" stroke-width="0.7" opacity="0.54"/><path d="M197.9 217.3Q205.4 250.0 206.5 323.6" stroke="#85503a" stroke-width="0.9" opacity="0.69"/><path d="M95.9 291.1Q99.3 324.3 112.4 325.0" stroke="#bb8466" stroke-width="1.0" opacity="0.50"/><path d="M91.2 294.9Q92.1 327.2 124.5 328.1" stroke="#6a3b2a" stroke-width="1.6" opacity="0.61"/><path d="M93.1 289.1Q97.6 320.2 129.5 322.4" stroke="#7a4632" stroke-width="1.1" opacity="0.66"/><path d="M87.5 297.5Q89.4 333.8 123.0 330.6" stroke="#6a3b2a" stroke-width="1.7" opacity="0.40"/><path d="M91.5 289.3Q89.9 316.5 129.5 320.0" stroke="#ad7457" stroke-width="1.2" opacity="0.60"/><path d="M90.4 287.3Q89.9 321.5 113.4 320.3" stroke="#85503a" stroke-width="1.5" opacity="0.36"/><path d="M95.3 292.6Q94.7 318.7 118.7 322.6" stroke="#bb8466" stroke-width="0.9" opacity="0.50"/><path d="M98.4 296.2Q102.5 321.8 125.7 323.3" stroke="#ad7457" stroke-width="0.9" opacity="0.60"/><path d="M88.7 295.8Q92.6 322.3 120.0 322.5" stroke="#c48e70" stroke-width="1.2" opacity="0.63"/><path d="M96.7 285.8Q102.1 316.9 112.6 318.9" stroke="#c48e70" stroke-width="0.9" opacity="0.56"/><path d="M91.1 291.7Q95.1 320.1 129.2 318.6" stroke="#bb8466" stroke-width="1.1" opacity="0.60"/><path d="M94.3 301.1Q98.9 315.8 129.0 318.9" stroke="#c48e70" stroke-width="1.8" opacity="0.68"/><path d="M91.4 290.0Q96.8 322.4 119.7 324.9" stroke="#c48e70" stroke-width="1.1" opacity="0.59"/><path d="M88.1 289.7Q92.4 325.2 127.5 324.5" stroke="#85503a" stroke-width="1.0" opacity="0.61"/><path d="M217.0 291.3Q214.9 331.4 194.5 327.5" stroke="#6a3b2a" stroke-width="1.8" opacity="0.44"/><path d="M215.0 291.9Q213.7 327.0 201.0 329.1" stroke="#ad7457" stroke-width="1.3" opacity="0.66"/><path d="M216.8 300.8Q217.5 327.9 204.8 329.6" stroke="#bb8466" stroke-width="1.4" opacity="0.48"/><path d="M222.9 294.0Q219.8 327.5 197.5 324.5" stroke="#85503a" stroke-width="1.0" opacity="0.37"/><path d="M217.0 294.9Q213.6 328.2 201.4 328.5" stroke="#6a3b2a" stroke-width="0.9" opacity="0.52"/><path d="M223.8 306.8Q221.6 319.4 206.8 322.4" stroke="#7a4632" stroke-width="1.4" opacity="0.64"/><path d="M216.3 291.5Q215.9 326.0 201.2 323.8" stroke="#c48e70" stroke-width="1.7" opacity="0.39"/><path d="M221.2 302.4Q218.0 323.3 197.0 325.7" stroke="#bb8466" stroke-width="0.8" opacity="0.61"/><path d="M225.0 306.3Q223.2 327.1 205.5 326.1" stroke="#6a3b2a" stroke-width="1.0" opacity="0.63"/><path d="M220.6 291.3Q219.9 327.1 195.4 326.0" stroke="#6a3b2a" stroke-width="1.5" opacity="0.49"/></g>
<g fill="none" stroke="#7f4a36" stroke-width="2.200" opacity="0.550" filter="url(#b1)">
<path d="M150 222C135 232 122 250 112 270C104 286 98 300 98 312"/>
<path d="M165 220C150 228 135 245 126 265C120 282 118 300 122 322"/>
<path d="M175 221C190 226 202 240 208 262C212 282 216 300 214 322"/>
<path d="M140 226C128 240 115 258 106 280"/>
<path d="M92 300C95 312 108 322 122 326"/>
<path d="M132 232C120 248 108 264 100 284"/>
<path d="M158 218C146 226 136 238 130 252"/>
<path d="M196 226C206 240 212 258 216 280C219 296 222 306 220 318"/>
<path d="M122 300C118 310 120 320 126 328"/>
<path d="M204 300C204 312 200 322 194 328"/>
<path d="M210 300C214 314 208 326 198 330"/>
</g>
<g fill="none" stroke="#c58c70" stroke-width="2" opacity="0.600" filter="url(#b1)">
<path d="M158 217C142 225 128 242 118 262"/>
<path d="M100 285C94 298 96 310 108 318"/>
<path d="M186 224C198 234 206 250 210 270"/>
<path d="M218 292C222 306 218 318 210 326"/>
</g>
<path d="M136.0 320.0C131.8 320.0 127.8 329.2 125.0 333.0C122.2 336.8 121.0 339.4 119.5 342.5C118.0 345.6 116.6 348.4 115.7 351.8C114.8 355.2 113.8 359.1 114.0 362.7C114.2 366.3 115.6 370.2 117.2 373.6C118.8 377.0 120.4 379.8 123.4 383.0C126.4 386.2 130.6 390.3 135.0 393.0C139.4 395.7 144.8 398.5 150.0 399.0C155.2 399.5 162.7 399.2 166.0 396.0C169.3 392.8 168.5 385.0 170.0 380.0C171.5 375.0 172.3 371.8 175.0 366.0C177.7 360.2 183.8 350.8 186.0 345.0C188.2 339.2 190.7 331.8 188.5 331.0C186.3 330.2 179.2 339.7 172.8 340.0C166.4 340.3 156.1 336.3 150.0 333.0C143.9 329.7 140.2 320.0 136.0 320.0Z" fill="url(#ng)"/>
<path d="M140.0 330.0C141.2 329.3 145.8 334.2 150.0 336.0C154.2 337.8 160.0 340.7 165.0 341.0C170.0 341.3 176.3 339.3 180.0 338.0C183.7 336.7 186.0 332.3 187.0 333.0C188.0 333.7 187.5 338.8 186.0 342.0C184.5 345.2 181.3 349.0 178.0 352.0C174.7 355.0 169.3 358.3 166.0 360.0C162.7 361.7 160.7 363.3 158.0 362.0C155.3 360.7 152.5 355.7 150.0 352.0C147.5 348.3 144.7 343.7 143.0 340.0C141.3 336.3 138.8 330.7 140.0 330.0Z" fill="#8f523e" opacity="0.850" filter="url(#b1)"/>
<g fill="none" stroke="#c48f78" stroke-width="1.400" opacity="0.700" filter="url(#b1)"><path d="M128 336C124 346 122 356 126 368"/><path d="M136 338C134 348 136 356 142 364"/><path d="M120 356C124 366 130 376 140 384"/></g>
<path d="M127 341l3 2" stroke="#555" stroke-width="1.500"/>
<path d="M157.0 364.0C157.5 361.7 162.8 360.5 166.0 358.0C169.2 355.5 172.7 352.4 176.0 349.0C179.3 345.6 183.6 337.1 185.7 337.8C187.8 338.5 187.4 349.9 188.8 353.4C190.2 356.9 195.5 356.9 194.0 359.0C192.5 361.1 185.2 363.8 180.0 366.0C174.8 368.2 166.8 372.3 163.0 372.0C159.2 371.7 156.5 366.3 157.0 364.0Z" fill="#d3ab9d"/>
<g stroke="#b98d80" stroke-width="1" opacity="0.700"><path d="M163 360l3 9M168 356l3 10M173 352l3 10M178 346l3 12M183 342l3 12"/></g>
<path d="M166.0 375.0C166.7 372.8 175.8 368.7 180.0 366.0C184.2 363.3 188.0 358.9 191.5 359.0C195.0 359.1 198.9 364.2 201.0 366.5C203.1 368.8 204.0 370.8 204.0 373.0C204.0 375.2 203.9 377.9 201.0 380.0C198.1 382.1 190.7 385.7 186.5 385.5C182.3 385.3 179.4 380.8 176.0 379.0C172.6 377.2 165.3 377.2 166.0 375.0Z" fill="#a5a5aa"/>
<path d="M95.0 383.0C94.3 381.7 101.1 378.5 104.0 376.0C106.9 373.5 110.2 368.3 112.5 368.0C114.8 367.7 116.1 371.3 118.0 374.0C119.9 376.7 124.0 381.5 124.0 384.0C124.0 386.5 120.7 389.0 118.0 389.0C115.3 389.0 111.8 385.0 108.0 384.0C104.2 383.0 95.7 384.3 95.0 383.0Z" fill="#adb0b5"/>
<path d="M60.0 389.0C63.0 388.5 72.2 387.0 78.0 386.0C83.8 385.0 89.7 383.8 95.0 383.0C100.3 382.2 105.8 380.2 110.0 381.0C114.2 381.8 115.8 385.8 120.0 388.0C124.2 390.2 130.0 392.2 135.0 394.0C140.0 395.8 144.8 398.7 150.0 399.0C155.2 399.3 162.3 398.8 166.0 396.0C169.7 393.2 170.3 385.3 172.0 382.0C173.7 378.7 173.6 375.7 176.0 376.0C178.4 376.3 182.2 383.6 186.5 384.0C190.8 384.4 199.6 381.3 202.0 378.3C204.4 375.3 198.9 367.7 201.0 366.0C203.1 364.3 208.3 367.4 214.5 368.2C220.7 369.0 231.5 369.6 238.0 370.8C244.5 372.0 249.9 373.7 253.5 375.2C257.1 376.7 257.6 379.0 259.7 380.0C261.8 381.0 264.9 381.2 266.0 381.4L266 463L60 463Z" fill="url(#bg)"/>
<g filter="url(#b1)" opacity="0.750">
<path d="M60 412C70 408 82 412 92 424C98 432 101 440 102 450" fill="none" stroke="#efc6b1" stroke-width="4" opacity="0.900"/>
<path d="M106 421L118 411" stroke="#d9a58e" stroke-width="2.500" opacity="0.900"/>
<path d="M146 456C156 452 166 444 172 436" stroke="#e3bba7" stroke-width="4" opacity="0.900" fill="none"/>
<path d="M103 448C104 455 110 460 116 463" stroke="#e3b7a2" stroke-width="3" opacity="0.900" fill="none"/>
<path d="M177 428C195 424 215 426 235 422C245 421 252 424 256 430" stroke="#f0cbb7" stroke-width="3" fill="none"/>
<path d="M262 386C259 400 264 415 261 430C260 442 264 452 262 460" stroke="#efc9b4" stroke-width="4" fill="none"/>
<path d="M185 432L188 462M200 430L202 462M165 440L164 462M225 428L228 462" stroke="#f7dccd" stroke-width="2.500" fill="none"/>
</g>
<path d="M162 372L182 388L166 402Z" fill="#fbe6d9"/>
<path d="M117.0 389.0C118.3 386.5 123.3 383.2 126.0 383.0C128.7 382.8 130.3 387.5 133.0 388.0C135.7 388.5 139.2 385.2 142.0 386.0C144.8 386.8 147.0 392.2 150.0 393.0C153.0 393.8 157.3 390.2 160.0 391.0C162.7 391.8 163.3 396.0 166.0 398.0C168.7 400.0 173.5 400.7 176.0 403.0C178.5 405.3 180.7 409.2 181.0 412.0C181.3 414.8 180.5 419.0 178.0 420.0C175.5 421.0 170.7 419.3 166.0 418.0C161.3 416.7 155.0 413.3 150.0 412.0C145.0 410.7 140.3 411.2 136.0 410.0C131.7 408.8 127.0 407.0 124.0 405.0C121.0 403.0 119.2 400.7 118.0 398.0C116.8 395.3 115.7 391.5 117.0 389.0Z" fill="#fdf0e8"/>
<g filter="url(#b1)"><path d="M122 395C132 398 140 396 148 402C158 408 170 406 178 414" fill="none" stroke="#e9cdbf" stroke-width="2.500"/><path d="M150 393C154 400 160 404 168 404" fill="none" stroke="#d8b9ac" stroke-width="2"/></g>
<path d="M170.0 233.0C174.6 231.8 175.2 233.5 179.0 235.0C182.8 236.5 189.2 238.9 193.0 242.0C196.8 245.1 199.8 249.7 202.0 253.5C204.2 257.3 205.7 261.4 206.5 265.0C207.3 268.6 207.1 272.0 207.0 275.0C206.9 278.0 206.6 279.4 206.0 282.8C205.4 286.2 204.9 290.8 203.4 295.5C201.9 300.2 198.9 305.7 197.0 310.8C195.1 315.9 194.0 322.0 191.9 326.0C189.8 330.0 187.4 332.7 184.2 335.0C181.0 337.3 177.0 339.6 172.8 340.0C168.6 340.4 163.4 339.3 159.0 337.6C154.6 335.9 150.1 333.0 146.3 330.0C142.5 327.0 138.6 323.8 136.0 319.7C133.4 315.6 132.2 310.8 131.0 305.7C129.8 300.6 129.1 294.1 129.0 289.0C128.9 283.9 129.6 279.0 130.4 275.0C131.2 271.0 132.0 268.6 133.6 265.0C135.2 261.4 137.0 257.3 140.0 253.5C143.0 249.7 146.4 245.4 151.4 242.0C156.4 238.6 165.4 234.2 170.0 233.0Z" fill="url(#fg)"/>
<g filter="url(#b1)">
<path d="M131 280C130 295 134 312 146 326C154 334 166 339 176 338" fill="none" stroke="#dba88f" stroke-width="3" opacity="0.450"/>
<path d="M203 262C206 280 202 300 194 318" fill="none" stroke="#d39c82" stroke-width="4" opacity="0.500"/>
<ellipse cx="170" cy="246" rx="8" ry="5" fill="#fbe6da" opacity="0.900"/>
</g>
<g filter="url(#b2)">
<ellipse cx="155" cy="275" rx="11" ry="6" fill="#d39a80" opacity="0.550"/>
<ellipse cx="195" cy="279" rx="9" ry="6" fill="#c98e74" opacity="0.600"/>
<path d="M205 255C209 275 205 300 194 322C190 330 186 334 182 336C192 318 198 296 199 270Z" fill="#c4866a" opacity="0.650"/>
<ellipse cx="173" cy="330" rx="12" ry="4" fill="#d9a288" opacity="0.600"/>
<ellipse cx="148" cy="298" rx="10" ry="12" fill="#f7d5c2" opacity="0.700"/>
<ellipse cx="171" cy="246" rx="12" ry="7" fill="#fbe3d6" opacity="0.900"/>
<ellipse cx="176" cy="308" rx="9" ry="3.500" fill="#cf957b" opacity="0.600"/>
</g>
<g filter="url(#b1)">
<path d="M143 268.500C151 264 162 263.500 171 266.500" fill="none" stroke="#9a5f47" stroke-width="3" stroke-linecap="round" opacity="0.900"/>
<path d="M185 269.500C191 268 199 269.500 205 273.500" fill="none" stroke="#9a5f47" stroke-width="3" stroke-linecap="round" opacity="0.900"/>
</g>
<path d="M146.500 277.500C151 273.500 160 273.500 165 278.500C159 281 152 281 146.500 277.500Z" fill="#e3d3cb"/>
<ellipse cx="155.500" cy="277.500" rx="3.800" ry="3" fill="#6b8290"/>
<circle cx="155.500" cy="277.500" r="1.400" fill="#33404a"/>
<path d="M145.500 277.500C151 272.500 160 272.500 165.500 278" fill="none" stroke="#5a3528" stroke-width="1.800" stroke-linecap="round"/>
<path d="M187 281.500C191 278 198 278.500 202 283C197 285 191 284.500 187 281.500Z" fill="#e3d3cb"/>
<ellipse cx="195" cy="281.800" rx="3.300" ry="2.800" fill="#6b8290"/>
<circle cx="195" cy="281.800" r="1.300" fill="#33404a"/>
<path d="M186 281C191 277 198.500 277.500 202.500 282.500" fill="none" stroke="#5a3528" stroke-width="1.800" stroke-linecap="round"/>
<g filter="url(#b1)"><path d="M182 270C183 283 185 293 183.500 300" fill="none" stroke="#cf977d" stroke-width="2.500" opacity="0.600"/><path d="M174 274C173 285 171 294 169 300" fill="none" stroke="#fbe3d6" stroke-width="3" opacity="0.700"/><path d="M168 302C172 306 180 306.500 185 302" fill="none" stroke="#a96e57" stroke-width="2.400" opacity="0.850"/></g>
<path d="M160 316C165 312 169.500 313 172.500 314.500C176 313 181 314.500 186.500 319C179 318.500 168 318 160 316Z" fill="#b5705e"/>
<path d="M160 316C168 318 179 318.500 186.500 319C181 323.500 176 325 171.500 325C166 324.500 162.500 320.500 160 316Z" fill="#d4937f"/>
<path d="M160 316C167 317.800 177 318 186.500 319" fill="none" stroke="#8f5142" stroke-width="1"/>
<path d="M123 239C125 236.500 129 237 131 238.500C134 240 134 244 131 245.500C128 246.500 125 245 123.500 243Z" fill="#f4f1ee"/>
</g>
</svg>
<svg id="fr" style="left:0;top:0" width="706" height="565" viewBox="0 0 706 565">
<rect x="59.500" y="170.500" width="207" height="293" fill="none" stroke="#9c9c9c" stroke-width="1"/>
<g fill="#fff" stroke="#8a8a8a" stroke-width="1.600">
<circle cx="59.500" cy="170.400" r="4.500"/><circle cx="163" cy="170.400" r="4.500"/><circle cx="266.500" cy="170.400" r="4.500"/>
<circle cx="59.500" cy="316.800" r="4.500"/><circle cx="266.500" cy="316.800" r="4.500"/>
<circle cx="59.500" cy="463.400" r="4.500"/><circle cx="163" cy="463.400" r="4.500"/><circle cx="266.500" cy="463.400" r="4.500"/>
</g>
<!-- layout options -->
<rect x="279.500" y="170.500" width="27" height="27" fill="#fdfdfd" stroke="#bcbcbc"/>
<g stroke="#4a7ebb" stroke-width="1">
<path d="M283 175.500h20M283 178.500h20M283 190.500h20M283 193.500h20"/>
<path d="M283 181.500h3.500M299.500 181.500h3.500M283 184.500h3M300 184.500h3M283 187.500h3M300 187.500h3"/>
</g>
<path d="M287 188a6 6 0 0 1 12 0h-3a3 3 0 0 0 -6 0z" fill="#7d7d7d"/>
<!-- cursor -->
<g>
<path d="M230.500 176v4.500M223 183.500h4.700M233.300 183.500h4.700" stroke="#2a1a1a" stroke-width="1.100" fill="none"/>
<path d="M228 178l2.500-2.700l2.500 2.700M224.800 181l-2.800 2.500l2.800 2.500M236 181l2.800 2.500l-2.800 2.500M228 189.300l1.800 1.200" stroke="#2a1a1a" stroke-width="1.300" fill="none"/>
<path d="M230.500 183.300L230.500 197.600L233.600 194.400L236.800 201.500L239.800 200.500L236.800 193.900L240.700 193.400Z" fill="#fff" stroke="#2a1a1a" stroke-width="1.100" stroke-linejoin="miter"/>
</g>
</svg>
<svg id="ov" style="left:0;top:0" width="706" height="565" viewBox="0 0 706 565">
<!-- L -->
<path d="M10 138v6.800h6.500" fill="none" stroke="#555" stroke-width="1.600"/>
<!-- indent markers -->
<path d="M53.500 128.500h10v4l-5 5l-5-5z" fill="#fff" stroke="#8a8a8a"/>
<path d="M53.500 149.500v-5l5-5l5 5v5z" fill="#fff" stroke="#8a8a8a"/>
<rect x="53.500" y="149.500" width="10" height="6" fill="#fff" stroke="#8a8a8a"/>
<path d="M595.500 149.500v-4.500l5-4.500l5 4.500v4.500z" fill="#fff" stroke="#8a8a8a"/>
<!-- margin marks -->
<path d="M37 163.500h22.500v-3.500" fill="none" stroke="#a6a6a6"/>
<path d="M625 163.500h-22.500v-3.500" fill="none" stroke="#a6a6a6"/>
<!-- scroll arrows -->
<path d="M701.500 137.500l3.500-4l3.500 4z" fill="#666"/>
<path d="M701.500 524l3.500 4l3.500-4z" fill="#666"/>
<path d="M9 540v7l-4-3.500z" fill="#666"/>
<path d="M686 540v7l4-3.500z" fill="#666"/>

<!-- tab icons -->
<g fill="none" stroke="#a9bbdb" stroke-width="1.200">
<path d="M537.500 20.500c-1.800-1.500-2.300-3-2.300-4.500a4.800 4.800 0 0 1 9.600 0c0 1.500-0.500 3-2.300 4.500z"/>
<path d="M537.700 22.500h4.600M538.200 24.300h3.600"/>
</g>
<g fill="none" stroke="#fff" stroke-width="1.500">
<circle cx="659.500" cy="14" r="4.200"/>
<path d="M652.500 24.500c0.300-3.500 2.200-5.600 4.800-6.300"/>
<path d="M660.500 21.500h6M663.500 18.500v6"/>
</g>
<!-- status icons -->
<g>
<rect x="451" y="553" width="38" height="12" fill="#c8c8c8"/>
<g fill="none" stroke="#555" stroke-width="1">
<path d="M425.500 557.500h5.500v8M437.500 557.500h-5.500v8M425.500 557.500v8M437.500 557.500v8M427 560.500h3M427 562.500h3M433 560.500h3M433 562.500h3"/>
<path d="M463.500 565v-8.500h12v8.500M465.500 559.500h8M465.500 561.500h8M465.500 563.500h8"/>
<path d="M501.500 565v-8.500h10v4M503.500 559.500h6M503.500 561.500h4M503.500 563.500h3"/>
<circle cx="512" cy="563.500" r="3.200" fill="#f3f3f3"/>
</g>
<path d="M245 556h4v3h-4zM250 557.500h6v7.500h-9v-4" fill="none" stroke="#555"/>
<rect x="245" y="556" width="4" height="3" fill="#555"/>
<path d="M251.500 560.500h3M251.500 562.500h3M249 562.500h1" stroke="#555"/>
<path d="M533 562h6" stroke="#555" stroke-width="1.600"/>
<path d="M542 562.500h100" stroke="#8a8a8a" stroke-width="1"/>
<rect x="589" y="557" width="4" height="8" fill="#555"/>
<path d="M646 562h7M649.500 558.500v7" stroke="#555" stroke-width="1.600"/>
</g>
</svg>
</body></html>
